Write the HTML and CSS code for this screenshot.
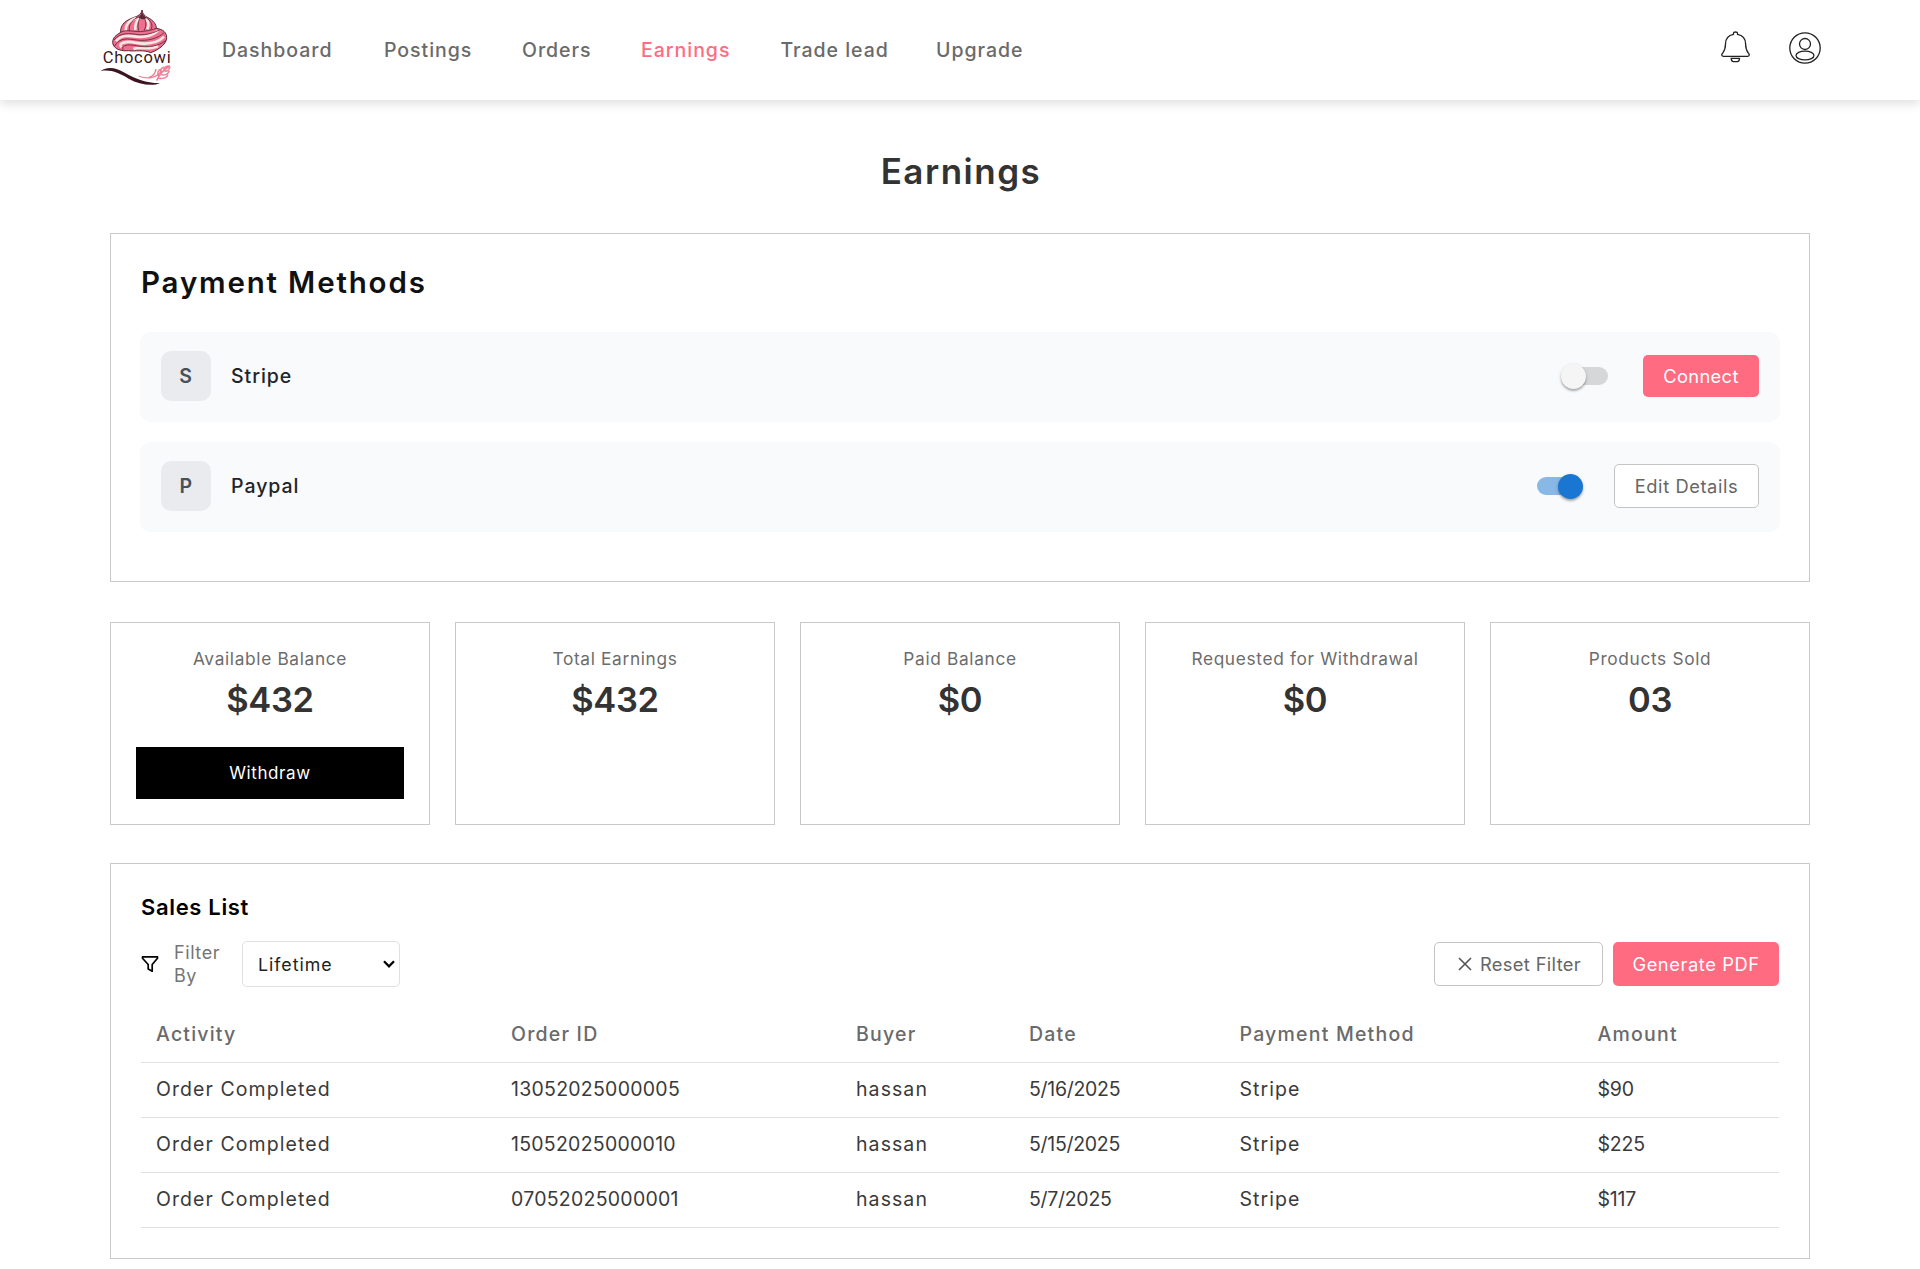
FILE: index.html
```html
<!DOCTYPE html>
<html lang="en">
<head>
<meta charset="utf-8">
<title>Chocowi - Earnings</title>
<link rel="stylesheet" href="styles.css">
</head>
<body>

<header class="header">
<a class="logo" href="#">
<svg width="76" height="84" viewBox="63 24 228 252">
<!-- swirl -->
<path d="M186 30C188 43 194 48 204 53C220 61 229 73 229 85C250 88 260 98 260 113C260 130 240 148 212 158C190 148 165 155 145 152C130 154 100 150 98 128C98 112 108 106 122 97C120 72 140 60 160 53C174 48 184 44 186 30z" fill="#ef6f90" stroke="#5a2735" stroke-width="3"/>
<g fill="none" stroke="#f9e8e2" stroke-width="8">
<path d="M168 54C146 62 136 76 137 92M182 50C168 62 164 76 166 90M194 52C206 62 208 74 202 88"/>
<path d="M108 124C122 104 146 106 170 110C195 112 220 104 234 92M124 142C112 130 138 122 165 128C200 134 232 130 252 110M160 147C180 138 206 152 234 138"/>
</g>
<g fill="none" stroke="#5a2735" stroke-width="2.5">
<path d="M176 50C152 62 146 76 148 94M184 48C174 62 172 76 176 92M188 48C200 62 200 76 192 92M194 50C216 64 220 76 212 90"/>
<path d="M122 97C140 86 165 98 190 94C205 93 220 88 229 85M102 120C120 96 150 100 175 104C200 106 222 98 238 90M104 138C118 112 145 116 170 120C202 124 234 116 252 98M130 150C120 134 150 132 175 138C205 144 236 138 257 122"/>
</g>
<path d="M186 28C186 42 190 48 200 53C190 60 182 58 174 52C182 48 185 42 186 28z" fill="#5a2735"/>
<!-- ribbon and wheat -->
<path d="M62 213C84 198 108 204 134 218C168 237 202 250 240 249C218 260 178 254 146 236C116 219 94 208 62 213z" fill="#3b1420"/>
<path d="M176 228C205 240 232 232 246 212" fill="none" stroke="#ee7e98" stroke-width="4"/>
<g fill="none" stroke="#ee7e98" stroke-width="4.500">
<path d="M207 232C222 228 226 220 228 207M230 242C236 228 248 210 270 198M236 228C230 218 236 210 242 208M243 219C240 208 246 202 252 202M252 210C250 202 258 198 268 198M236 235C250 238 262 232 264 224M244 224C254 228 266 222 268 212M254 212C260 216 268 210 270 200"/>
</g>
<text class="logo-text" x="68" y="190" textLength="204">Chocowi</text>
</svg>
</a>
<nav class="nav">
<a href="#" class="n1">Dashboard</a>
<a href="#" class="n2">Postings</a>
<a href="#" class="n3">Orders</a>
<a href="#" class="n4 active">Earnings</a>
<a href="#" class="n5">Trade lead</a>
<a href="#" class="n6">Upgrade</a>
</nav>
<div class="header-icons">
<svg width="32" height="34" viewBox="0 0 32 34" fill="none" stroke="#222" stroke-width="1.3">
<path d="M13.500 4.300V3Q13.500 2 15.500 2Q17.500 2 17.500 3V4.300C23 5.300 25.600 9.300 25.600 14C25.600 20 27 21.300 28.800 23.700C29.800 25.100 29 26.300 27.700 26.300H3.300C2 26.300 1.200 25.100 2.200 23.700C4 21.300 5.500 20 5.500 14C5.500 9.300 8.200 5.300 13.500 4.300z"/>
<path d="M11.200 28.300h8.300q0 3.300-2.300 3.300h-3.600q-2.400 0-2.400-3.300z"/>
</svg>
<svg width="32" height="32" viewBox="0 0 32 32" fill="none" stroke="#222" stroke-width="1.3">
<circle cx="16" cy="16" r="15.200"/>
<circle cx="16" cy="12" r="5.500"/>
<ellipse cx="16" cy="23.500" rx="9" ry="4.300"/>
</svg>
</div>
</header>

<main class="main">
<h1>Earnings</h1>

<section class="panel payments">
<h2>Payment Methods</h2>
<div class="method">
<span class="badge">S</span>
<span class="name">Stripe</span>
<span class="switch"></span>
<button class="btn btn-pink connect">Connect</button>
</div>
<div class="method">
<span class="badge">P</span>
<span class="name">Paypal</span>
<span class="switch on"></span>
<button class="btn btn-line edit">Edit Details</button>
</div>
</section>

<section class="cards">
<div class="card"><p>Available Balance</p><strong>$432</strong><button class="withdraw">Withdraw</button></div>
<div class="card"><p>Total Earnings</p><strong>$432</strong></div>
<div class="card"><p>Paid Balance</p><strong>$0</strong></div>
<div class="card"><p>Requested for Withdrawal</p><strong>$0</strong></div>
<div class="card"><p>Products Sold</p><strong>03</strong></div>
</section>

<section class="panel sales">
<h3>Sales List</h3>
<div class="toolbar">
<svg class="funnel" width="18" height="18" viewBox="0 0 18 18" fill="none" stroke="#000" stroke-width="1.7" stroke-linejoin="round"><path d="M1.500 1.800h15v1.400l-5.300 6.300v6.700l-4-2.200V9.500L1.500 3.200z"/></svg>
<span class="filter-label">Filter<br>By</span>
<div class="select"><span>Lifetime</span><svg width="12" height="8" viewBox="0 0 12 8" fill="none" stroke="#000" stroke-width="2.300"><path d="M1 1.300l5 5 5-5"/></svg></div>
<button class="btn btn-line reset"><svg width="14" height="14" viewBox="0 0 14 14" stroke="#555" stroke-width="1.600"><path d="M1 1l12 12M13 1L1 13"/></svg>Reset Filter</button>
<button class="btn btn-pink generate">Generate PDF</button>
</div>
<table>
<thead>
<tr><th class="c1">Activity</th><th class="c2">Order ID</th><th class="c3">Buyer</th><th class="c4">Date</th><th class="c5">Payment Method</th><th>Amount</th></tr>
</thead>
<tbody>
<tr><td>Order Completed</td><td class="num">13052025000005</td><td>hassan</td><td class="date">5/16/2025</td><td>Stripe</td><td class="amount">$90</td></tr>
<tr><td>Order Completed</td><td class="num">15052025000010</td><td>hassan</td><td class="date">5/15/2025</td><td>Stripe</td><td class="amount">$225</td></tr>
<tr><td>Order Completed</td><td class="num">07052025000001</td><td>hassan</td><td class="date">5/7/2025</td><td>Stripe</td><td class="amount">$117</td></tr>
</tbody>
</table>
</section>
</main>

</body>
</html>
```
FILE: styles.css
```css
* {box-sizing:border-box;}
body {margin:0;background:#fff;color:#333;font-family:Inter, "Open Sans", sans-serif;font-size:19.5px;letter-spacing:.03em;overflow:hidden;}
h1, h2, h3, p {margin:0;}
button {font:inherit;letter-spacing:inherit;padding:0;}

.header {display:flex;align-items:flex-start;height:100px;padding:8px 99px 0 101px;box-shadow:0 4px 10px rgba(0,0,0,.12);}
.logo {width:121px;}
.logo svg {display:block;}
.logo-text {font-family:Roboto, sans-serif;font-size:49.5px;letter-spacing:0;fill:#3b1420;}
.nav {display:flex;padding-top:30px;line-height:24px;letter-spacing:.05em;}
.nav a {color:#6a6a6a;font-weight:500;text-decoration:none;white-space:nowrap;}
.nav a.active {color:#ff6b81;}
.nav .n1 {width:162px;}
.nav .n2 {width:138px;}
.nav .n3 {width:119px;}
.nav .n4 {width:139.5px;}
.nav .n5 {width:155.5px;}
.header-icons {display:flex;align-items:flex-start;gap:37px;margin-left:auto;padding-top:22px;}
.header-icons svg + svg {margin-top:2px;}

.main {width:1700px;margin:0 auto;}
h1 {height:133px;padding:49px 0 0 2px;line-height:44px;font-size:35px;font-weight:600;letter-spacing:.043em;text-align:center;color:#333;}

.panel {border:1px solid #c9c9c9;padding:30px;}
.payments {height:349px;padding:29px 29px 30px;}
.payments h2 {height:69px;padding-left:1px;line-height:38px;font-size:29.5px;font-weight:600;letter-spacing:.062em;color:#111;}
.method {display:flex;align-items:center;height:90px;padding:0 21px 2px 21px;margin-bottom:20px;border-radius:10px;background:#f8fafb;}
.badge {width:50px;height:50px;line-height:50px;border-radius:10px;background:#e9ebef;text-align:center;font-weight:600;color:#495057;}
.name {margin-left:20px;color:#212529;font-weight:500;letter-spacing:.05em;}
.switch {position:relative;width:42px;height:18px;margin:0 35px 0 auto;border-radius:9px;background:#d6d7d8;}
.switch:after {content:"";position:absolute;left:-5px;top:-3px;width:25px;height:25px;border-radius:50%;background:#f5f5f5;box-shadow:0 2px 2px rgba(0,0,0,.25), 0 1px 4px rgba(0,0,0,.12);}
.switch.on {background:#8ab8e6;}
.switch.on:after {left:21px;background:#1976d2;}

.btn {height:44px;border-radius:5px;font-size:18.3px;white-space:nowrap;}
.btn-pink {border:none;background:#ff6b81;color:#fff;}
.btn-line {border:1px solid #c4c4c4;background:#fff;color:#666;}
.connect {width:116px;height:42px;letter-spacing:.02em;}
.edit {width:145px;}

.cards {display:grid;grid-template-columns:repeat(5, 1fr);gap:25px;margin:40px 0 38px;}
.card {height:203px;padding:24px 25px;border:1px solid #c9c9c9;text-align:center;}
.card p {height:28px;line-height:24px;font-size:17.3px;letter-spacing:.038em;color:#6c6c6c;white-space:nowrap;}
.card strong {display:block;height:72px;line-height:50px;font-size:34.5px;font-weight:600;letter-spacing:-.01em;color:#333;}
.withdraw {display:block;width:100%;height:52px;border:none;background:#000;color:#fff;font-size:17px;}

.sales {height:396px;padding-top:28px;}
.sales h3 {height:49px;line-height:30px;font-size:22px;font-weight:600;letter-spacing:.03em;color:#000;}
.toolbar {display:flex;align-items:center;height:46px;}
.filter-label {width:68px;margin-left:15px;padding-top:1px;line-height:22.5px;font-size:18px;color:#757575;}
.select {display:flex;align-items:center;justify-content:space-between;width:158px;height:46px;padding:0 4px 0 15px;border:1px solid #e0e0e0;border-radius:5px;color:#222;font-size:17.8px;letter-spacing:.055em;}
.reset {display:flex;align-items:center;justify-content:center;gap:8px;width:169px;margin:0 10px 0 auto;padding-left:2px;letter-spacing:.02em;}
.generate {width:166px;}

table {width:100%;margin-top:20px;border-collapse:collapse;table-layout:fixed;}
th, td {height:55px;padding:0 0 0 15px;border-bottom:1px solid #e0e0e0;text-align:left;white-space:nowrap;}
th {font-weight:500;letter-spacing:.062em;color:#6a6a6a;}
td {padding-bottom:1px;color:#3a3a3a;letter-spacing:.055em;}
.c1 {width:355px;}
.c2 {width:345px;}
.c3 {width:173px;}
.c4 {width:210.5px;}
.c5 {width:358px;}
.num {letter-spacing:.013em;}
.date {letter-spacing:-.015em;}
.amount {letter-spacing:-.01em;}
```
